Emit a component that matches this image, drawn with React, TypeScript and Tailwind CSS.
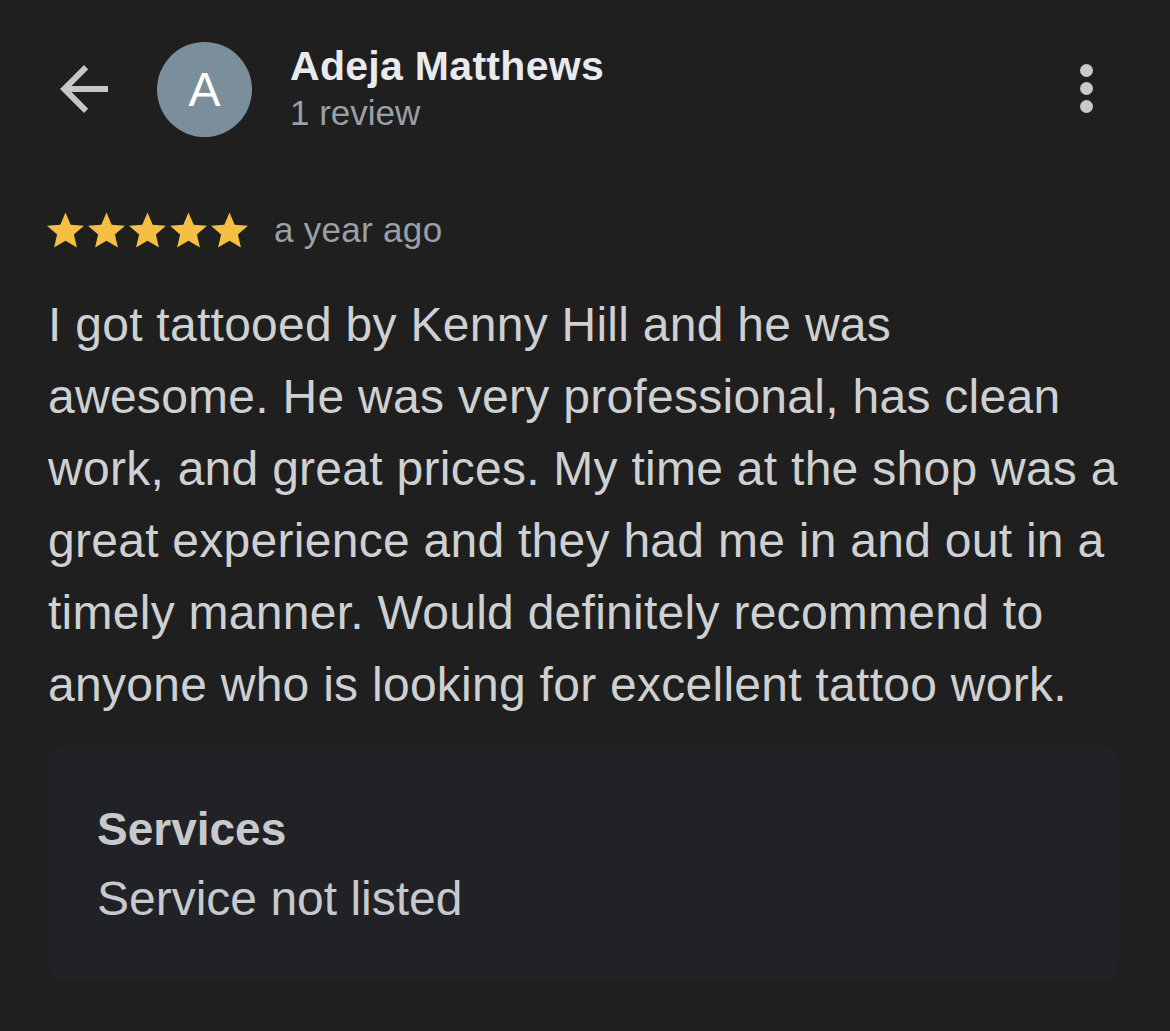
import React from "react";

const STAR_PATH =
  "M12 17.27L18.18 21l-1.64-7.03L22 9.24l-7.19-.61L12 2 9.19 8.63 2 9.24l5.46 4.73L5.82 21z";

function Star() {
  return (
    <svg viewBox="2 2 20 19" className="h-[36px] w-[37px]" fill="#f4bf42">
      <path d={STAR_PATH} />
    </svg>
  );
}

export default function App() {
  return (
    <div
      className="h-[1031px] w-[1170px] overflow-hidden bg-[#1f1f1f]"
      style={{ fontFamily: '"Liberation Sans", Arial, sans-serif' }}
    >
      {/* header */}
      <div className="flex items-start pt-[42px] pr-[77px]">
        <svg
          viewBox="0 0 24 24"
          className="ml-[48px] mt-[11px] h-[72px] w-[72px]"
          fill="#c4c6c8"
        >
          <path d="M20 11H7.83l5.59-5.59L12 4l-8 8 8 8 1.41-1.41L7.83 13H20v-2z" />
        </svg>
        <div className="ml-[37px] flex h-[95px] w-[95px] items-center justify-center rounded-full bg-[#7b8e9b] text-[48px] leading-none text-white">
          A
        </div>
        <div className="ml-[38px]">
          <div className="text-[41px] font-bold leading-[48px] tracking-[0.3px] text-[#e8eaed]">
            Adeja Matthews
          </div>
          <div className="mt-px text-[35px] leading-[44px] text-[#9aa0a6]">1 review</div>
        </div>
        <svg viewBox="0 0 13 49" className="ml-auto mt-[22px] h-[49px] w-[13px]" fill="#c8c9cb">
          <circle cx="6.5" cy="6.5" r="6.5" />
          <circle cx="6.5" cy="24.5" r="6.5" />
          <circle cx="6.5" cy="42.5" r="6.5" />
        </svg>
      </div>

      {/* rating */}
      <div className="mt-[75px] flex items-center pl-[47px]">
        <div className="flex gap-[4px]">
          <Star />
          <Star />
          <Star />
          <Star />
          <Star />
        </div>
        <span className="ml-[26px] text-[35px] leading-[36px] tracking-[0.3px] text-[#9aa0a6]">
          a year ago
        </span>
      </div>

      {/* review body */}
      <p className="mt-[41px] pl-[48px] text-[48px] leading-[72px] tracking-[0.27px] text-[#cfd0d2]">
        I got tattooed by Kenny Hill and he was
        <br />
        awesome. He was very professional, has clean
        <br />
        work, and great prices. My time at the shop was a
        <br />
        great experience and they had me in and out in a
        <br />
        timely manner. Would definitely recommend to
        <br />
        anyone who is looking for excellent tattoo work.
      </p>

      {/* services */}
      <div className="ml-[48px] mt-[24px] w-[1071px] rounded-2xl bg-[#212226] pb-[47px] pl-[49px] pt-[49px]">
        <div className="text-[46px] font-bold leading-[70px] text-[#c8c9cc]">Services</div>
        <div className="text-[48px] leading-[70px] text-[#c8c9cc]">Service not listed</div>
      </div>
    </div>
  );
}
